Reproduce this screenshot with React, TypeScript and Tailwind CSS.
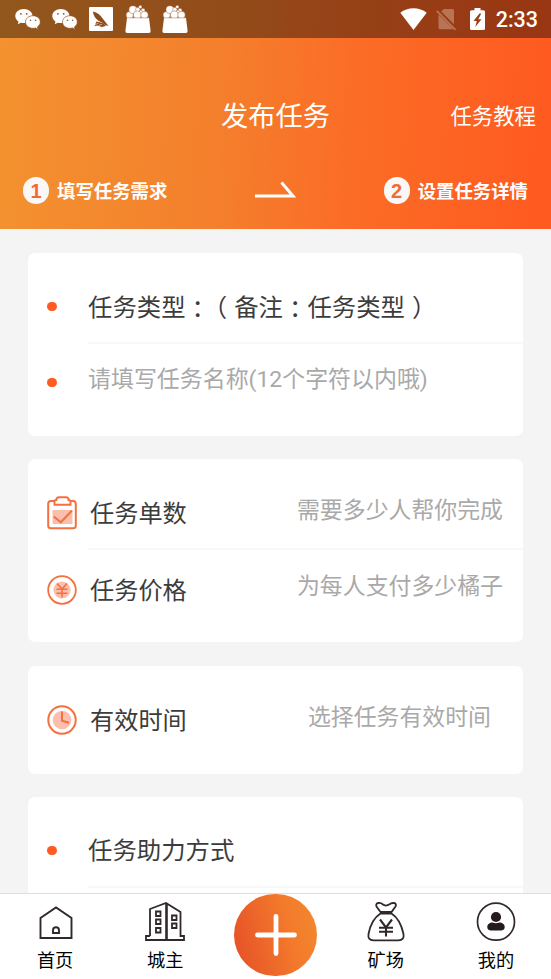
import type { ReactNode } from "react";

interface RowProps {
  icon: ReactNode;
  label: string;
  hint?: string;
  hintClass?: string;
  className?: string;
}

function WechatIcon() {
  return (
    <svg width="26" height="24" viewBox="0 0 26 24">
      <path d="M8.800 1C4 1 .3 4.100.3 8c0 2.300 1.300 4.200 3.200 5.500L2.800 16.300l3-1.600c1 .3 2 .4 3 .4 4.800 0 8.700-3.100 8.700-7.100S13.600 1 8.800 1z" fill="#fff" />
      <path d="M18 7.700c-4.200 0-7.500 2.800-7.500 6.300s3.300 6.300 7.500 6.300c.9 0 1.700-.1 2.500-.4l2.600 1.500-.7-2.500c1.700-1.200 2.900-2.900 2.900-4.900 0-3.500-3.200-6.300-7.300-6.300z" fill="#fff" stroke="#91501c" strokeWidth=".7" />
      <g fill="#91501c">
        <circle cx="5.900" cy="5.800" r=".9" />
        <circle cx="11.700" cy="5.800" r=".9" />
        <circle cx="15.500" cy="12.200" r=".8" />
        <circle cx="20.600" cy="12.200" r=".8" />
      </g>
    </svg>
  );
}

function BirdIcon() {
  return (
    <svg width="24" height="24" viewBox="0 0 24 24">
      <rect width="24" height="24" rx="1" fill="#fff" />
      <path d="M4 4.500c4 .8 7.500 3.500 10 7.500l5.500 7-3.500-1-3-2.500C8 13.500 4.200 9.500 4 4.500z" fill="#8d4a1b" />
      <path d="M7.500 14.500l6 1.500 3.500 3-4.500 1-3.500-1.500-3.500.5z" fill="#8d4a1b" />
      <path d="M6 17.500l3.500-1.200M10 18.200l3-.7" stroke="#fff" strokeWidth=".6" />
    </svg>
  );
}

function BasketIcon() {
  return (
    <svg width="26" height="29" viewBox="0 0 26 29">
      <g fill="#fff" stroke="#934b1b" strokeWidth=".4">
        <circle cx="4.700" cy="10" r="3.600" />
        <circle cx="7.900" cy="4.700" r="4" />
        <circle cx="12.800" cy="4.600" r="2.300" />
        <circle cx="18" cy="5.300" r="2" />
        <circle cx="15.300" cy="1.900" r="1.700" />
        <circle cx="15.900" cy="6.900" r="1.800" />
        <circle cx="12.300" cy="9.900" r="4" />
        <circle cx="19.500" cy="10" r="3.700" />
      </g>
      <path d="M2 12.700h22L25.600 26q.2 2-1.800 2H2.200Q.2 28 .4 26z" fill="#fff" />
      <path d="M2.500 12.900h21" stroke="#934b1b" strokeWidth=".4" />
    </svg>
  );
}

function StatusBar() {
  return (
    <div className="flex h-[38px] shrink-0 items-start bg-black/40 text-white">
      <div className="flex pl-[15px]">
        <div className="w-[37px] pt-2"><WechatIcon /></div>
        <div className="w-[37px] pt-2"><WechatIcon /></div>
        <div className="w-9 pt-[7px]"><BirdIcon /></div>
        <div className="w-[37px] pt-[5px]"><BasketIcon /></div>
        <div className="pt-[5px]"><BasketIcon /></div>
      </div>
      <div className="ml-auto flex pr-[13px]">
        <svg className="mt-2 mr-[9px]" width="27" height="22" viewBox="0 0 27 22">
          <path d="M13.500 22L.3 4.800C4 1.800 8.500.3 13.500.3S23 1.800 26.700 4.800z" fill="#fff" />
        </svg>
        <svg className="mt-[9px] mr-[13px]" width="21" height="22" viewBox="0 0 21 22">
          <path d="M8 0h8.500q1.500 0 1.500 1.500v13.700L5.300 2.600zM2.500 5.500L17.300 20q-.4.300-1 .3H4q-1.500 0-1.500-1.500z" fill="#b87457" />
          <path d="M.8 1.800l18.700 19" stroke="#b87457" strokeWidth="1.800" />
        </svg>
        <svg className="mt-2 mr-[11px]" width="15" height="22" viewBox="0 0 15 22">
          <path d="M4.500 0h6v2.200h3q1.500 0 1.500 1.500v16.800q0 1.500-1.500 1.500h-12Q0 22 0 20.500V3.700q0-1.500 1.500-1.500h3z" fill="#fff" />
          <path d="M9.500 5.500L3.500 13h3.300L5.300 19l6.200-7.700H8.300l3-5.800z" fill="#983f17" />
        </svg>
        <span className="mt-1 font-[Roboto,sans-serif] text-[21.500px] leading-8 font-medium">2:33</span>
      </div>
    </div>
  );
}

function Step({ num, text }: { num: number; text: string }) {
  return (
    <div className="flex items-center gap-2">
      <span className="flex h-[27px] w-[26px] items-center justify-center rounded-full bg-[#faf8f7] font-['Liberation_Sans','Noto_Sans_CJK_SC',sans-serif] text-[20px] leading-none font-bold text-[#f26a36]">
        {num}
      </span>
      <span className="pb-0.5 text-[18.400px] leading-6 font-bold">{text}</span>
    </div>
  );
}

function Header() {
  return (
    <header className="flex h-[229px] shrink-0 flex-col bg-[linear-gradient(93deg,#f39230_0%,#f47f2c_40%,#fb6d27_63%,#ff5a20_99%)] text-white">
      <StatusBar />
      <div className="grid h-[153px] grid-cols-[1fr_auto_1fr] items-center">
        <h1 className="col-start-2 pb-px text-[27.200px] leading-8">发布任务</h1>
        <span className="pr-[15px] text-right text-[21.400px] leading-8">任务教程</span>
      </div>
      <div className="-mt-[14px] flex items-center justify-between pr-[23px] pl-[23px]">
        <Step num={1} text="填写任务需求" />
        <svg className="mb-px" width="42" height="20" viewBox="0 0 42 20" fill="none">
          <path d="M0 16h38L26.500 2.500" stroke="#fff" strokeWidth="3" />
        </svg>
        <Step num={2} text="设置任务详情" />
      </div>
    </header>
  );
}

function Dot() {
  return <span className="h-[9px] w-[10px] rounded-full bg-[#ff5a22]" />;
}

function ClipboardIcon() {
  return (
    <svg width="30" height="34" viewBox="0 0 30 34" fill="none">
      <path d="M5.500 14h20v14h-20z" fill="#fdbfad" />
      <path d="M8 5H4Q1.200 5 1.200 7.800v22Q1.200 32.300 4 32.300h22q2.800 0 2.800-2.500v-22Q28.800 5 26 5h-3" stroke="#f4713f" strokeWidth="2" />
      <path d="M7.500 8.700V5.500Q7.500 4 9.300 4 9.300 1.200 12 1.200h7q2.600 0 2.600 2.800 1.900 0 1.900 1.500v3.200z" stroke="#f4713f" strokeWidth="1.900" />
      <path d="M6.800 20.500l7 5.800L25 14.500" stroke="#f4713f" strokeWidth="2" />
    </svg>
  );
}

function CoinIcon() {
  return (
    <svg width="30" height="30" viewBox="0 0 30 30" fill="none">
      <circle cx="15" cy="15" r="13.800" stroke="#f4713f" strokeWidth="1.800" />
      <circle cx="15" cy="15" r="8.600" fill="#fdbfad" />
      <path d="M10 8.500l5 5.500 5-5.500M15 14v8.500M9.500 14.300h11M9.500 18.200h11" stroke="#f4713f" strokeWidth="1.600" />
    </svg>
  );
}

function ClockIcon() {
  return (
    <svg width="30" height="30" viewBox="0 0 30 30" fill="none">
      <circle cx="15" cy="15" r="13.700" stroke="#f4713f" strokeWidth="2" />
      <circle cx="15" cy="15" r="9.300" fill="#fdbfad" />
      <path d="M15 6.500v9.300l7 2" stroke="#f4713f" strokeWidth="2" />
    </svg>
  );
}

function IconRow({ icon, label, hint, hintClass = "pr-5", className = "" }: RowProps) {
  return (
    <div className={`flex items-center pl-[19px] ${className}`}>
      {icon}
      <span className="ml-[13px] pb-0.5 text-[24.200px] leading-8 text-[#3c3c3c]">{label}</span>
      <span className={`ml-auto pb-[11px] text-[22.900px] leading-8 text-[#a9a9a9] ${hintClass}`}>{hint}</span>
    </div>
  );
}

function Card({ children, className = "" }: { children: ReactNode; className?: string }) {
  return <section className={`shrink-0 rounded-[7px] bg-white ${className}`}>{children}</section>;
}

function Divider() {
  return <div className="ml-[60px] h-0.5 bg-[#f8f8f8]" />;
}

// Colon sits in the middle of its em box
function Colon() {
  return <span className="inline-block translate-y-0.5 font-['Noto_Sans_CJK_TC',sans-serif]">：</span>;
}

function NavItem({ icon, label }: { icon: ReactNode; label: string }) {
  return (
    <div className="flex flex-1 flex-col items-center pt-1.5">
      <div className="flex h-[43px] items-center">{icon}</div>
      <span className="mt-1 text-[18.200px] leading-6 text-black">{label}</span>
    </div>
  );
}

function BottomNav() {
  return (
    <nav className="flex h-[86px] shrink-0 border-t border-[#dedede] bg-white">
      <NavItem
        label="首页"
        icon={
          <svg className="ml-0.5" width="34" height="40" viewBox="0 0 34 40" fill="none" stroke="#30282a" strokeWidth="1.900">
            <path d="M1.500 36v-20L17 5.500l15.500 10.500v20z" />
            <path d="M14 31v-2.700q0-3 3-3t3 3V31z" />
          </svg>
        }
      />
      <NavItem
        label="城主"
        icon={
          <svg width="40" height="42" viewBox="0 0 40 42" fill="none" stroke="#30282a" strokeWidth="1.800">
            <path d="M5 35V8L21 2l14.500 9v24H39v4H1v-4h4" />
            <path d="M21.500 2.500v36.500" strokeWidth="2.600" />
            <path d="M11 10.500h4.500V15H11zM11 18.500h4.500V23H11zM11 27h4.500v4.500H11zM27 14.500h4.500V19H27zM27 22.500h4.500V27H27z" />
          </svg>
        }
      />
      <div className="flex flex-1 justify-center">
        <button className="flex h-[82px] w-[83px] items-center justify-center rounded-full bg-[linear-gradient(75deg,#e65128_5%,#f37a2b_65%,#f28a2e_100%)]">
          <svg width="42" height="42" viewBox="0 0 42 42">
            <path d="M21 2.500v37M2.500 21h37" stroke="#fff" strokeWidth="4.800" strokeLinecap="round" />
          </svg>
        </button>
      </div>
      <NavItem
        label="矿场"
        icon={
          <svg width="38" height="42" viewBox="0 0 38 42" fill="none" stroke="#30282a" strokeWidth="1.800">
            <path d="M13.500 11L9.500 5.500Q8.300 2.500 11.500 2q2.800-.3 4 1.300 3.500 2.500 7 0Q24 1.800 26.800 2q3.200.5 1.700 3.500l-4 5.500z" />
            <path d="M13.500 12.500h11c5.500 3.500 9.700 9.700 12 20.500q1 6-5 6.300h-25q-6-.3-5-6.300c2-10.500 6.500-17 12-20.500z" />
            <path d="M13 18.500l6 8 6-8M19 26.500v9M12 26.700h14M12 30.700h14" strokeWidth="2.100" />
          </svg>
        }
      />
      <NavItem
        label="我的"
        icon={
          <svg width="40" height="40" viewBox="0 0 40 40">
            <circle cx="20" cy="19.700" r="18.500" fill="none" stroke="#30282a" strokeWidth="1.700" />
            <circle cx="20" cy="15" r="5.100" fill="#251b1d" />
            <path d="M11.300 25.200c0-3.500 3.500-5 6-4.500q2.700.9 5.400 0c2.500-.5 6 1 6 4.500 0 2.300-2 3.200-3.500 3.200H14.800c-1.500 0-3.500-.9-3.500-3.200z" fill="#251b1d" />
          </svg>
        }
      />
    </nav>
  );
}

export default function App() {
  return (
    <div className="flex h-[979px] w-[551px] flex-col overflow-hidden bg-[#f4f4f4] font-['Noto_Sans_CJK_SC',sans-serif]">
      <Header />

      <main className="flex min-h-0 flex-1 flex-col overflow-hidden pt-6 pr-7 pl-7">
        {/* Task type and name */}
        <Card className="h-[183px]">
          <div className="flex h-[89px] items-center pt-[17px] pl-[19px]">
            <Dot />
            <span className="ml-[31px] pb-px text-[24.400px] leading-8 text-[#3c3c3c] [text-spacing-trim:space-all]">
              任务类型
              <Colon />
              <span className="mr-[7px] ml-[5px] [font-feature-settings:'halt']">（</span>
              备注
              <Colon />
              任务类型
              <span className="ml-[7px] [font-feature-settings:'halt']">）</span>
            </span>
          </div>
          <Divider />
          <div className="flex h-[92px] items-center pb-[15px] pl-[19px]">
            <Dot />
            <span className="ml-[31px] pb-[5px] font-[Roboto,'Noto_Sans_CJK_SC',sans-serif] text-[22.950px] leading-8 text-[#a9a9a9]">
              请填写任务名称(12个字符以内哦)
            </span>
          </div>
        </Card>

        {/* Amount and price */}
        <Card className="mt-[23px] h-[183px]">
          <IconRow className="h-[89px] pt-[19px]" icon={<ClipboardIcon />} label="任务单数" hint="需要多少人帮你完成" />
          <Divider />
          <IconRow className="h-[92px] pb-[13px]" icon={<CoinIcon />} label="任务价格" hint="为每人支付多少橘子" />
        </Card>

        {/* Valid time */}
        <Card className="mt-6 h-[108px]">
          <IconRow className="h-full" icon={<ClockIcon />} label="有效时间" hint="选择任务有效时间" hintClass="pr-8" />
        </Card>

        {/* Boost mode */}
        <Card className="mt-[23px] h-[183px]">
          <div className="flex h-[89px] items-center pt-[17px] pl-[19px]">
            <Dot />
            <span className="ml-[31px] pb-0.5 text-[24.400px] leading-8 text-[#3c3c3c]">任务助力方式</span>
          </div>
          <Divider />
        </Card>
      </main>

      <BottomNav />
    </div>
  );
}
